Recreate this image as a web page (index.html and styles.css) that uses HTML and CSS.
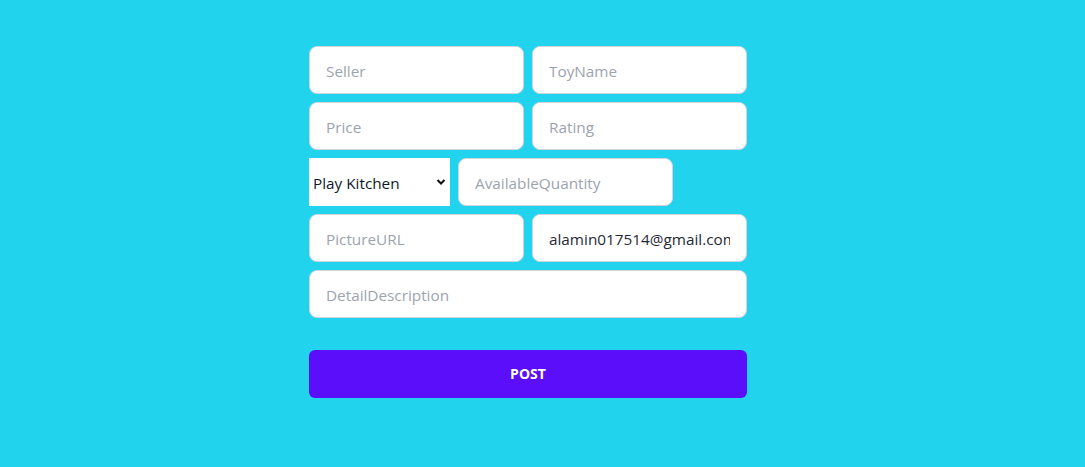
FILE: index.html
```html
<!DOCTYPE html>
<html>
<head>
<meta charset="utf-8">
<link rel="stylesheet" href="styles.css">
</head>
<body>
<main class="page">
  <form class="form">
    <div class="row">
      <input class="field" type="text" placeholder="Seller">
      <input class="field" type="text" placeholder="ToyName">
    </div>
    <div class="row">
      <input class="field" type="text" placeholder="Price">
      <input class="field" type="text" placeholder="Rating">
    </div>
    <div class="row">
      <span class="select-wrap">
        <select class="select">
          <option>Play Kitchen</option>
        </select>
        <svg class="chev" width="10" height="8" viewBox="0 0 10 8"><path d="M1.5 2 L5 5.5 L8.5 2" fill="none" stroke="#111" stroke-width="2"/></svg>
      </span>
      <input class="field" type="text" placeholder="AvailableQuantity">
    </div>
    <div class="row">
      <input class="field" type="text" placeholder="PictureURL">
      <input class="field" type="email" value="alamin017514@gmail.com">
    </div>
    <div class="row">
      <input class="field wide" type="text" placeholder="DetailDescription">
    </div>
    <button class="post" type="button">POST</button>
  </form>
</main>
</body>
</html>
```
FILE: styles.css
```css
html, body {
  margin: 0;
  padding: 0;
  background: #22d3ee;
  height: 100%;
}
body {
  font-family: "Open Sans", "Noto Sans", sans-serif;
}
.page {
  display: flex;
  justify-content: center;
  padding-top: 46px;
  padding-right: 29px;
}
.form {
  width: 438px;
  display: flex;
  flex-direction: column;
  gap: 8px;
}
.row {
  display: flex;
  gap: 8px;
}
.field {
  box-sizing: border-box;
  width: 215px;
  height: 48px;
  border: 1px solid #d1d5db;
  border-radius: 8px;
  background: #fff;
  padding: 1px 16px 0;
  font-family: inherit;
  font-size: 15.3px;
  color: #1f2937;
  outline: none;
}
.field::placeholder {
  color: #9ca3af;
}
.field.wide {
  width: 438px;
}
.select-wrap {
  position: relative;
  display: block;
  width: 141px;
  height: 48px;
}
.select {
  appearance: none;
  -webkit-appearance: none;
  box-sizing: border-box;
  width: 141px;
  height: 48px;
  border: none;
  border-radius: 0;
  background: #fff;
  padding: 1px 4px 0;
  font-family: inherit;
  font-size: 15.3px;
  color: #111827;
  outline: none;
}
.chev {
  position: absolute;
  right: 4px;
  top: 20px;
  pointer-events: none;
}
.post {
  margin-top: 24px;
  width: 438px;
  height: 48px;
  border: none;
  border-radius: 6px;
  background: #5b0ef9;
  color: #fff;
  font-family: inherit;
  font-weight: 700;
  font-size: 14px;
  padding: 0 0 2px;
}
```
